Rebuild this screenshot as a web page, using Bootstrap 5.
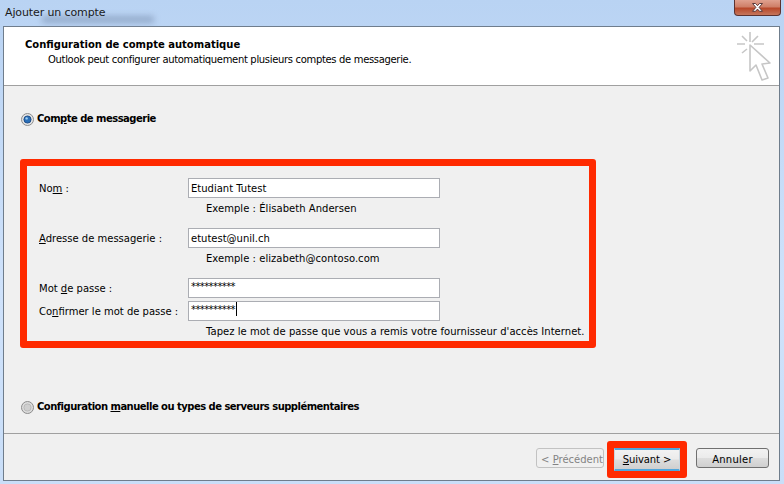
<!DOCTYPE html>
<html lang="fr">
<head>
<meta charset="utf-8">
<title>Ajouter un compte</title>
<link href="https://cdn.jsdelivr.net/npm/bootstrap@5.3.0/dist/css/bootstrap.min.css" rel="stylesheet">
<style>
html,body{margin:0;height:100%;overflow:hidden}
body{font-family:"DejaVu Sans",sans-serif;font-size:10px;color:#000;background:#c4dcf8}
.dlg{width:784px;height:484px;background:linear-gradient(180deg,#b9d3f3 0,#cfe2fb 60%,#c9def8 100%);overflow:hidden;position:relative}
.smudge{position:absolute;left:42px;top:16px;width:112px;height:7px;background:#7f95b5;filter:blur(3px);opacity:.65}
.cap{height:26px;padding:6px 0 0 5px;font-size:11px;line-height:14px;letter-spacing:-.12px;color:#1a1a1a;position:relative}
.xbtn{width:47px;height:16px;background:linear-gradient(180deg,#e0a18f 0,#cf7f68 45%,#b8482a 55%,#c5765c 100%);border:1px solid #5c3230;border-top:0;border-radius:0 0 4px 4px;margin-right:3px;margin-top:-6px}
.xbtn svg{display:block}
.pane{margin:0 4px 0 3px;height:455px;background:#f0f0f0;border:1px solid #6f7d8c}
.top{height:59px;background:#fff;border-bottom:1px solid #a0a0a0;padding:10px 0 0 21px}
.ttl{font-weight:700;font-size:10px;line-height:15px}
.sub{padding-left:23px;line-height:15px;letter-spacing:-.33px}
.mid{padding:0 0 0 16px;height:347px}
.opt{font-weight:700;line-height:14px;gap:3px;letter-spacing:-.52px;padding-left:1px}
.opt1{padding-top:26px}
.opt2{padding-top:52px}
.rad{width:13px;height:13px;display:block;flex:none}
.box{width:576px;height:189px;border:7px solid #ff2a00;border-radius:3px;margin-top:33px;padding:12px 0 0 12px;box-sizing:border-box}
.rowf{display:flex;align-items:center;height:20px}
.lbl{width:149px;flex:none;line-height:14px;margin-top:2px}
.fld{width:252px;height:20px;background:#fff;border:1px solid #abadb3;padding:0 2px;line-height:20px;color:#000}
.pw{letter-spacing:-.6px;line-height:16px;overflow:hidden}
.caret{display:inline-block;width:1px;height:14px;background:#000;vertical-align:-3px;margin-left:1px}
.hint{padding-left:167px;line-height:14px;margin-top:4px;letter-spacing:.04px}
.g1{margin-top:12px}
.g2{margin-top:3px}
u{text-underline-offset:1px}
.foot{height:47px;border-top:1px solid #a0a0a0;padding:14px 10px 0 0;justify-content:flex-end}
.wb{height:20px;font-size:10px;line-height:18px;border:1px solid #707070;border-radius:3px;background:linear-gradient(180deg,#f2f2f2 0,#ebebeb 48%,#dddddd 52%,#cfcfcf 100%);text-align:center;color:#000;padding:2px 0 0;display:block}
.prev{width:68px;color:#838383;border-color:#c2c2c2;background:#f0f0f0;padding-left:4px}
.rbox{width:80px;height:37px;border:7px solid #ff2a00;border-radius:3px;margin:-7px 9px 0 3px;box-sizing:border-box;flex:none}
.next{width:100%;height:23px;border:0;border-top:2px solid #4fa6dc;border-bottom:2px solid #4fa6dc;border-left:1px solid #c9d6df;border-right:1px solid #c9d6df;border-radius:0;background:linear-gradient(180deg,#f2f2f2 0,#ebebeb 48%,#dddddd 52%,#cfcfcf 100%);line-height:18px;padding:0;letter-spacing:-.1px}
.cancel{width:73px;letter-spacing:.25px}
</style>
</head>
<body>
<div class="dlg">
  <div class="smudge"></div>
  <div class="cap d-flex justify-content-between">
    <span>Ajouter un compte</span>
    <div class="xbtn"><svg width="45" height="15" viewBox="0 0 45 15"><path d="M17.5 3.5 h3 l2 2.2 l2-2.2 h3 l-3.4 3.9 l3.4 3.9 h-3 l-2-2.2 l-2 2.2 h-3 l3.4-3.9z" fill="#fff" stroke="#5a3a3a" stroke-width="1"/></svg></div>
  </div>
  <div class="pane">
    <div class="top position-relative">
      <div class="ttl">Configuration de compte automatique</div>
      <div class="sub">Outlook peut configurer automatiquement plusieurs comptes de messagerie.</div>
      <svg class="position-absolute" style="left:727px;top:4px" width="40" height="52" viewBox="727 31 40 52" fill="none" stroke="#c6c6c6" stroke-width="1.6"><path d="M746 42 V32 M733 44 H741 M750 44 H760 M738 36 L743 41 M754 36 L748 42 M738 53 L743 49"/><path d="M746 45 V71 L752 65 L758 80 L764 78 L758 64 L766 63 Z" stroke-linejoin="round"/></svg>
    </div>
    <div class="mid">
      <div class="opt opt1 d-flex align-items-center">
        <svg class="rad" viewBox="0 0 13 13"><circle cx="6.5" cy="6.5" r="6" fill="#e4e4e4" stroke="#8c8c8c"/><circle cx="6.5" cy="6.5" r="3.6" fill="#2a6fb8" stroke="#123e78" stroke-width=".8"/><circle cx="5.6" cy="5.4" r="1.2" fill="#9fd0f5"/></svg>
        <span>Com<u>p</u>te de messagerie</span>
      </div>
      <div class="box">
        <div class="rowf"><span class="lbl">No<u>m</u> :</span><div class="fld">Etudiant Tutest</div></div>
        <div class="hint">Exemple : Élisabeth Andersen</div>
        <div class="rowf g1"><span class="lbl"><u>A</u>dresse de messagerie :</span><div class="fld">etutest@unil.ch</div></div>
        <div class="hint">Exemple : elizabeth@contoso.com</div>
        <div class="rowf g1"><span class="lbl">Mot <u>d</u>e passe :</span><div class="fld pw">**********</div></div>
        <div class="rowf g2"><span class="lbl">Co<u>n</u>firmer le mot de passe :</span><div class="fld pw">**********<span class="caret"></span></div></div>
        <div class="hint">Tapez le mot de passe que vous a remis votre fournisseur d'accès Internet.</div>
      </div>
      <div class="opt opt2 d-flex align-items-center">
        <svg class="rad" viewBox="0 0 13 13"><circle cx="6.5" cy="6.5" r="6" fill="#dcdcdc" stroke="#8c8c8c"/><circle cx="6.5" cy="6.5" r="3.6" fill="#cfcfcf" stroke="#b4b4b4" stroke-width=".8"/></svg>
        <span>Configuration <u>m</u>anuelle ou types de serveurs supplémentaires</span>
      </div>
    </div>
    <div class="foot d-flex align-items-start">
      <button class="wb prev" type="button" disabled>&lt; <u>P</u>récédent</button>
      <div class="rbox"><button class="wb next" type="button"><u>S</u>uivant &gt;</button></div>
      <button class="wb cancel" type="button">Annuler</button>
    </div>
  </div>
</div>
<script src="https://cdn.jsdelivr.net/npm/bootstrap@5.3.0/dist/js/bootstrap.bundle.min.js"></script>
</body>
</html>
